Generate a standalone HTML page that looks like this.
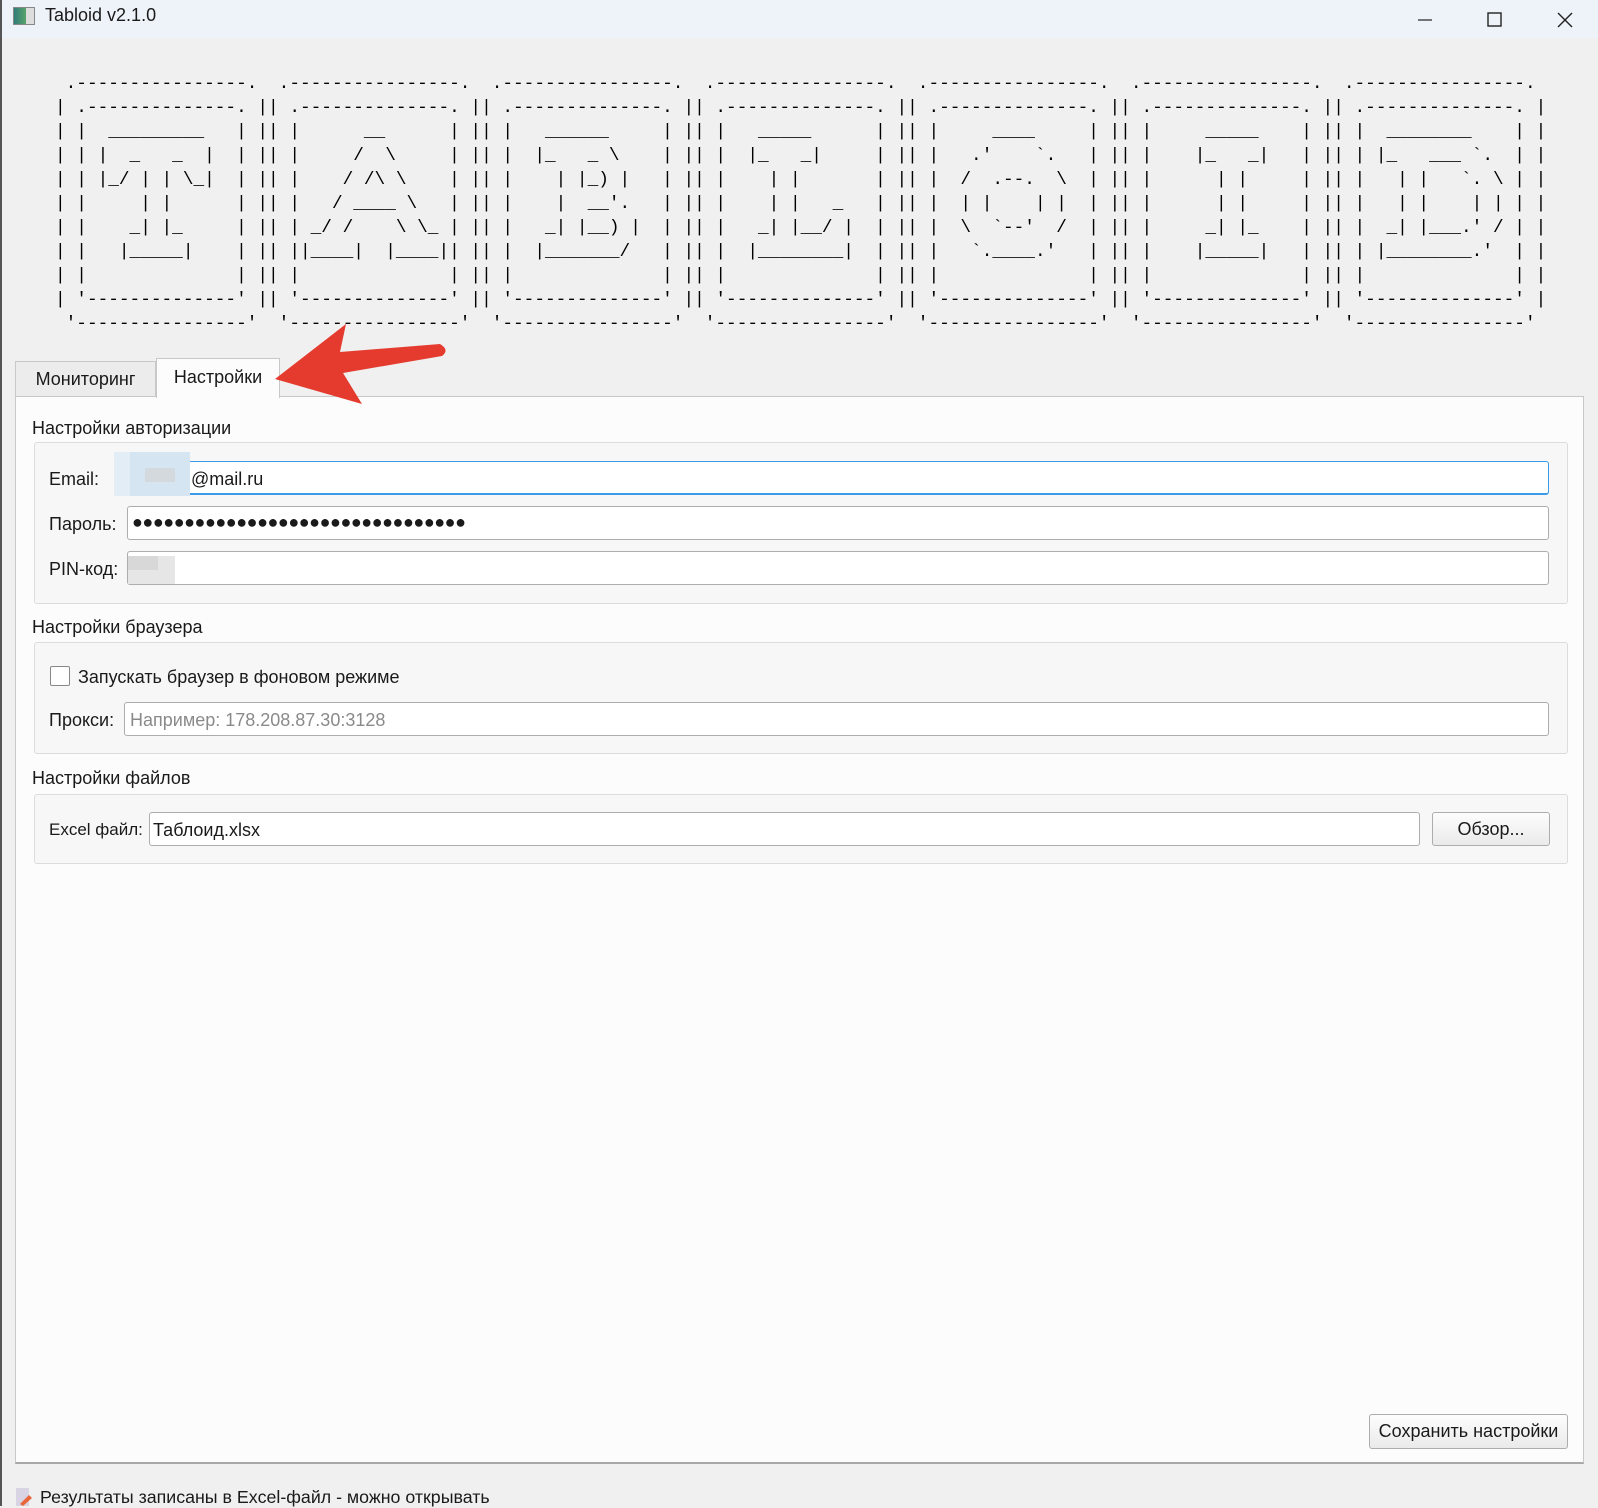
<!DOCTYPE html>
<html><head><meta charset="utf-8">
<style>
*{box-sizing:border-box;margin:0;padding:0}
body{width:1598px;height:1506px;overflow:hidden;background:#f0f0f0;font-family:"Liberation Sans","DejaVu Sans",sans-serif;font-size:18px;color:#1a1a1a;position:relative}
.abs{position:absolute}
#title{left:0;top:0;width:1598px;height:38px;background:#eef2f9}
#ascii{left:55px;top:72px;font-family:"Liberation Mono",monospace;font-size:17.75px;line-height:24px;white-space:pre;color:#000;letter-spacing:0}
.tab{border:1px solid #c8c8c8;border-bottom:none;text-align:center}
.inp{background:#fff;border:1px solid #adadad;border-radius:3px;height:34px}
.grp{border:1px solid #dcdcdc;border-radius:3px;background:#f7f7f7}
.lbl{line-height:20px}
.btn{border:1px solid #adadad;border-radius:3px;background:linear-gradient(#fdfdfd,#eaeaea);text-align:center;line-height:33px}
</style></head><body>
<div id="title" class="abs"></div>
<div class="abs" style="left:0;top:0;width:2px;height:1506px;background:#555"></div>
<div class="abs" style="left:13px;top:7px;width:22px;height:18px;border:1px solid #888;background:linear-gradient(90deg,#2f7d7a,#5aa46a 60%,#ddd 60%)"></div>
<div class="abs lbl" style="left:45px;top:5px;font-size:18px">Tabloid v2.1.0</div>
<svg class="abs" style="left:1410px;top:5px" width="175" height="30">
<line x1="8" y1="15" x2="22" y2="15" stroke="#222" stroke-width="1.2"/>
<rect x="78" y="8" width="13" height="13" fill="none" stroke="#222" stroke-width="1.4"/>
<line x1="148" y1="8" x2="162" y2="22" stroke="#222" stroke-width="1.4"/><line x1="162" y1="8" x2="148" y2="22" stroke="#222" stroke-width="1.4"/>
</svg>
<div id="ascii" class="abs"> .----------------.  .----------------.  .----------------.  .----------------.  .----------------.  .----------------.  .----------------. 
| .--------------. || .--------------. || .--------------. || .--------------. || .--------------. || .--------------. || .--------------. |
| |  _________   | || |      __      | || |   ______     | || |   _____      | || |     ____     | || |     _____    | || |  ________    | |
| | |  _   _  |  | || |     /  \     | || |  |_   _ \    | || |  |_   _|     | || |   .'    `.   | || |    |_   _|   | || | |_   ___ `.  | |
| | |_/ | | \_|  | || |    / /\ \    | || |    | |_) |   | || |    | |       | || |  /  .--.  \  | || |      | |     | || |   | |   `. \ | |
| |     | |      | || |   / ____ \   | || |    |  __'.   | || |    | |   _   | || |  | |    | |  | || |      | |     | || |   | |    | | | |
| |    _| |_     | || | _/ /    \ \_ | || |   _| |__) |  | || |   _| |__/ |  | || |  \  `--'  /  | || |     _| |_    | || |  _| |___.' / | |
| |   |_____|    | || ||____|  |____|| || |  |_______/   | || |  |________|  | || |   `.____.'   | || |    |_____|   | || | |________.'  | |
| |              | || |              | || |              | || |              | || |              | || |              | || |              | |
| '--------------' || '--------------' || '--------------' || '--------------' || '--------------' || '--------------' || '--------------' |
 '----------------'  '----------------'  '----------------'  '----------------'  '----------------'  '----------------'  '----------------' </div>

<div class="abs tab" style="left:15px;top:361px;width:141px;height:36px;background:#ececec;line-height:34px">Мониторинг</div>
<div class="abs" style="left:15px;top:396px;width:1569px;border:1px solid #c8c8c8;border-bottom:2px solid #a8a8a8;background:#fcfcfc;height:1068px"></div>
<div class="abs tab" style="left:156px;top:358px;width:124px;height:40px;background:#fcfcfc;line-height:36px">Настройки</div>

<div class="abs lbl" style="left:32px;top:418px">Настройки авторизации</div>
<div class="abs grp" style="left:34px;top:442px;width:1534px;height:162px"></div>
<div class="abs lbl" style="left:49px;top:469px">Email:</div>
<div class="abs inp" style="left:127px;top:461px;width:1422px;border-color:#3c9ae8;border-width:1px 1px 2px 1px"></div>
<div class="abs" style="left:114px;top:452px;width:76px;height:44px;background:#e2edf6"></div>
<div class="abs" style="left:130px;top:452px;width:60px;height:44px;background:#d5e5f1"></div>
<div class="abs" style="left:145px;top:468px;width:30px;height:14px;background:#d4d9de"></div>
<div class="abs lbl" style="left:191px;top:469px">@mail.ru</div>
<div class="abs lbl" style="left:49px;top:514px">Пароль:</div>
<div class="abs inp" style="left:127px;top:506px;width:1422px"></div>
<div class="abs" style="left:132px;top:511px;font-size:18px;letter-spacing:-0.45px;line-height:22px">●●●●●●●●●●●●●●●●●●●●●●●●●●●●●●●●</div>
<div class="abs lbl" style="left:49px;top:559px">PIN-код:</div>
<div class="abs inp" style="left:127px;top:551px;width:1422px"></div>
<div class="abs" style="left:128px;top:556px;width:47px;height:28px;background:#e6e6e6"></div>
<div class="abs" style="left:128px;top:556px;width:30px;height:14px;background:#d8d8d8"></div>

<div class="abs lbl" style="left:32px;top:617px">Настройки браузера</div>
<div class="abs grp" style="left:34px;top:642px;width:1534px;height:112px"></div>
<div class="abs" style="left:50px;top:666px;width:20px;height:20px;border:1px solid #888;background:#fff;border-radius:2px"></div>
<div class="abs lbl" style="left:78px;top:667px">Запускать браузер в фоновом режиме</div>
<div class="abs lbl" style="left:49px;top:710px">Прокси:</div>
<div class="abs inp" style="left:124px;top:702px;width:1425px"></div>
<div class="abs lbl" style="left:130px;top:710px;color:#8a8a8a">Например: 178.208.87.30:3128</div>

<div class="abs lbl" style="left:32px;top:768px">Настройки файлов</div>
<div class="abs grp" style="left:34px;top:794px;width:1534px;height:70px"></div>
<div class="abs lbl" style="left:49px;top:820px;font-size:17px">Excel файл:</div>
<div class="abs inp" style="left:149px;top:812px;width:1271px"></div>
<div class="abs lbl" style="left:153px;top:820px">Таблоид.xlsx</div>
<div class="abs btn" style="left:1432px;top:812px;width:118px;height:34px">Обзор...</div>

<div class="abs btn" style="left:1369px;top:1414px;width:199px;height:35px;font-size:18px">Сохранить настройки</div>

<svg class="abs" style="left:14px;top:1486px" width="20" height="20"><rect x="2" y="2" width="13" height="18" fill="#d8d4e4"/><path d="M6 18 L15 9 L18 12 L9 20Z" fill="#e8663a"/></svg>
<div class="abs" style="left:40px;top:1486px;font-size:17.8px;line-height:22px">Результаты записаны в Excel-файл - можно открывать</div>

<svg class="abs" style="left:0;top:0" width="1598" height="500">
<path d="M275 379 L346 324 L340 352 L440 344 Q450 350 442 356 L343 373 L362 404 Z" fill="#e53b2f"/>
</svg>
</body></html>
